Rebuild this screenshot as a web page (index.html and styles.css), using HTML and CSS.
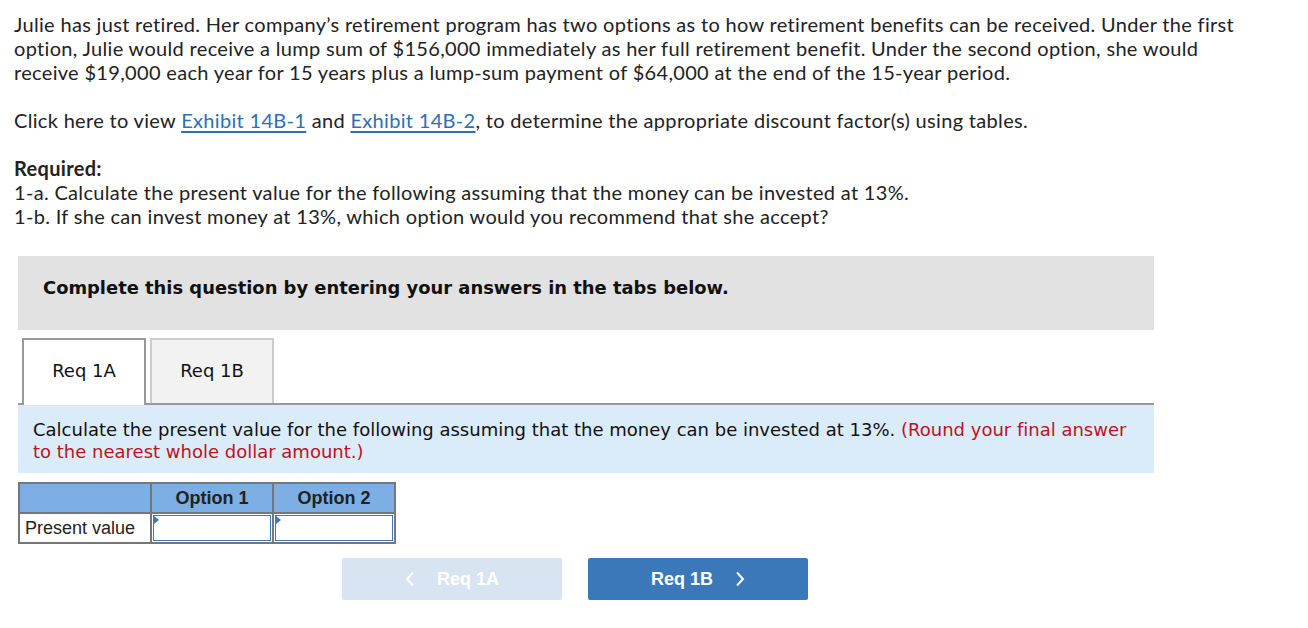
FILE: index.html
```html
<!DOCTYPE html>
<html>
<head>
<meta charset="utf-8">
<link rel="stylesheet" href="styles.css">
</head>
<body>
<div class="page">
  <p class="intro">Julie has just retired. Her company’s retirement program has two options as to how retirement benefits can be received. Under the first option, Julie would receive a lump sum of $156,000 immediately as her full retirement benefit. Under the second option, she would receive $19,000 each year for 15 years plus a lump-sum payment of $64,000 at the end of the 15-year period.</p>
  <p class="intro">Click here to view <a href="#">Exhibit 14B-1</a> and <a href="#">Exhibit 14B-2</a>, to determine the appropriate discount factor(s) using tables.</p>
  <div class="required">
    <div class="req-title">Required:</div>
    <div>1-a. Calculate the present value for the following assuming that the money can be invested at 13%.</div>
    <div>1-b. If she can invest money at 13%, which option would you recommend that she accept?</div>
  </div>

  <div class="work">
    <div class="banner">Complete this question by entering your answers in the tabs below.</div>
    <div class="tabs">
      <div class="tab active">Req 1A</div>
      <div class="tab">Req 1B</div>
    </div>
    <div class="instr">Calculate the present value for the following assuming that the money can be invested at 13%. <span class="red">(Round your final answer to the nearest whole dollar amount.)</span></div>

    <table class="grid">
      <tr class="head">
        <th class="c1"></th>
        <th class="c2">Option 1</th>
        <th class="c3">Option 2</th>
      </tr>
      <tr>
        <td class="label">Present value</td>
        <td class="inp"><span class="field"><span class="flag"></span></span></td>
        <td class="inp"><span class="field"><span class="flag"></span></span></td>
      </tr>
    </table>

    <div class="nav">
      <div class="btn prev"><svg class="chev" viewBox="0 0 10 16" width="10" height="16"><path d="M8 1.5 L2 8 L8 14.5" fill="none" stroke="currentColor" stroke-width="2"/></svg><span>Req 1A</span></div>
      <div class="btn next"><span>Req 1B</span><svg class="chev" viewBox="0 0 10 16" width="10" height="16"><path d="M2 1.5 L8 8 L2 14.5" fill="none" stroke="currentColor" stroke-width="2"/></svg></div>
    </div>
  </div>
</div>
</body>
</html>
```

FILE: styles.css
```css
html, body {
  margin: 0;
  padding: 0;
  background: #fff;
}
.page {
  padding: 12px 0 0 14px;
  font-family: Lato, "Liberation Sans", sans-serif;
  font-variant-ligatures: none;
  color: #222;
  font-size: 20px;
  letter-spacing: 0.32px;
  line-height: 24px;
}
.intro {
  margin: 0 0 24px 0;
  max-width: 1240px;
}
.intro a {
  color: #2c6fb7;
  text-decoration: underline;
  text-underline-offset: 3px;
}
.req-title {
  font-weight: bold;
}
.work {
  margin: 28px 0 0 4px;
  width: 1136px;
  letter-spacing: 0;
}
.banner {
  background: #e2e2e2;
  height: 74px;
  box-sizing: border-box;
  padding: 20px 0 0 25px;
  font-family: "DejaVu Sans", Verdana, sans-serif;
  font-weight: bold;
  font-size: 17.9px;
  line-height: 24px;
  color: #111;
}
.tabs {
  display: flex;
  gap: 4px;
  margin-top: 8px;
  padding-left: 4px;
  border-bottom: 2px solid #999;
}
.tab {
  width: 124px;
  height: 65px;
  box-sizing: border-box;
  border: 2px solid #ccc;
  border-bottom: none;
  background: #f2f2f2;
  font-family: "DejaVu Sans", Verdana, sans-serif;
  font-size: 18px;
  color: #111;
  display: flex;
  align-items: center;
  justify-content: center;
  padding-bottom: 2px;
  margin-bottom: -2px;
}
.tab.active {
  border-color: #999;
  background: #fff;
  height: 67px;
  padding-bottom: 4px;
}
.instr {
  background: #daebf9;
  padding: 14px 15px 10px 15px;
  font-family: "DejaVu Sans", Verdana, sans-serif;
  font-size: 18px;
  line-height: 22px;
  color: #111;
}
.red {
  color: #c0111e;
}
.grid {
  border-collapse: collapse;
  margin-top: 9px;
  font-family: "Liberation Sans", Arial, sans-serif;
  font-size: 18px;
  color: #222;
}
.grid th, .grid td {
  border: 2px solid #777;
  padding: 0;
  height: 28px;
}
.grid .head th {
  background: #7daee4;
  font-weight: bold;
}
.c1 { width: 130px; }
.c2, .c3 { width: 120px; }
.label {
  text-align: left;
  padding-left: 5px !important;
}
.inp {
  background: #fff;
}
.field {
  display: block;
  position: relative;
  margin: 1px;
  height: 26px;
  border: 1px solid #3a78b9;
  box-sizing: border-box;
}
.flag {
  position: absolute;
  left: 0;
  top: 0;
  width: 0;
  height: 0;
  border-top: 4px solid transparent;
  border-bottom: 4px solid transparent;
  border-left: 5px solid #3a78b9;
}
.nav {
  display: flex;
  gap: 26px;
  margin: 14px 0 0 324px;
}
.btn {
  width: 220px;
  height: 42px;
  border-radius: 2px;
  display: flex;
  align-items: center;
  justify-content: center;
  gap: 22px;
  color: #fff;
  font-family: "Liberation Sans", Arial, sans-serif;
  font-weight: bold;
  font-size: 18px;
}
.btn.prev {
  background: #d8e4f2;
}
.btn.next {
  background: #3a78b9;
}
.chev {
  display: block;
}
```
